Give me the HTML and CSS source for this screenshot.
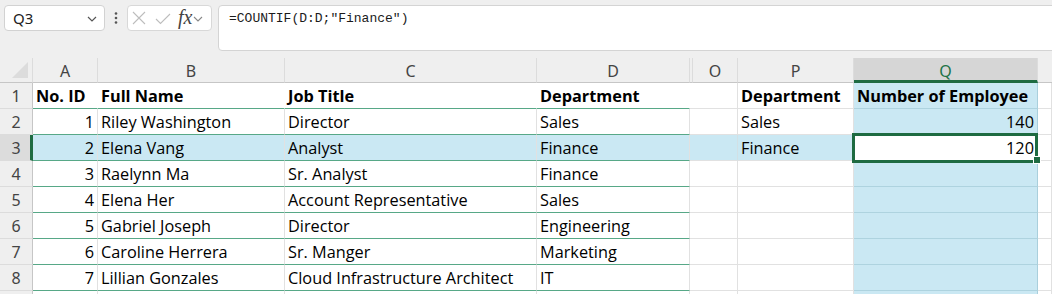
FILE: index.html
```html
<!DOCTYPE html>
<html>
<head>
<meta charset="utf-8">
<link rel="stylesheet" href="styles.css">
</head>
<body>
<div class="topbar">
  <div class="namebox">
    <span class="nb-text">Q3</span>
    <svg class="nb-chev" width="10" height="6" viewBox="0 0 10 6"><path d="M1 1 L5 5 L9 1" fill="none" stroke="#555" stroke-width="1.2"/></svg>
  </div>
  <div class="dots">
    <svg width="4" height="12" viewBox="0 0 4 12"><circle cx="2" cy="1.5" r="1.3" fill="#555"/><circle cx="2" cy="6" r="1.3" fill="#555"/><circle cx="2" cy="10.5" r="1.3" fill="#555"/></svg>
  </div>
  <div class="fxbox">
    <svg class="ic-x" width="14" height="14" viewBox="0 0 14 14"><path d="M1 1 L13 13 M13 1 L1 13" stroke="#bdbdbd" stroke-width="1.1" fill="none"/></svg>
    <svg class="ic-check" width="16" height="12" viewBox="0 0 16 12"><path d="M1 6 L5.5 10.5 L15 1" stroke="#bdbdbd" stroke-width="1.1" fill="none"/></svg>
    <span class="fx">fx</span>
    <svg class="fx-chev" width="10" height="6" viewBox="0 0 10 6"><path d="M1 1 L5 5 L9 1" fill="none" stroke="#888" stroke-width="1.1"/></svg>
  </div>
  <div class="formula">=COUNTIF(D:D;"Finance")</div>
</div>

<div class="sheet">
  <!-- header row -->
  <div class="h corner"><svg width="18" height="18" viewBox="0 0 18 18"><path d="M17 1 L17 17 L1 17 Z" fill="#dcdcdc"/></svg></div>
  <div class="h">A</div>
  <div class="h">B</div>
  <div class="h">C</div>
  <div class="h">D</div>
  <div class="h gaph"></div>
  <div class="h">O</div>
  <div class="h">P</div>
  <div class="h hsel">Q</div>
  <div class="h hlast"></div>

  <!-- row 1 -->
  <div class="r">1</div>
  <div class="c t th">No. ID</div>
  <div class="c t th">Full Name</div>
  <div class="c t th">Job Title</div>
  <div class="c t th">Department</div>
  <div class="c gap"></div>
  <div class="c"></div>
  <div class="c b">Department</div>
  <div class="c q b">Number of Employee</div>
  <div class="c"></div>

  <!-- row 2 -->
  <div class="r">2</div>
  <div class="c t num">1</div>
  <div class="c t">Riley Washington</div>
  <div class="c t">Director</div>
  <div class="c t">Sales</div>
  <div class="c gap"></div>
  <div class="c"></div>
  <div class="c">Sales</div>
  <div class="c q num">140</div>
  <div class="c"></div>

  <!-- row 3 -->
  <div class="r rsel">3</div>
  <div class="c t num hl">2</div>
  <div class="c t hl">Elena Vang</div>
  <div class="c t hl">Analyst</div>
  <div class="c t hl">Finance</div>
  <div class="c gap hl"></div>
  <div class="c hl hlg"></div>
  <div class="c hl hlg">Finance</div>
  <div class="c num active">120<div class="sel"></div><div class="handle"></div></div>
  <div class="c"></div>

  <!-- row 4 -->
  <div class="r">4</div>
  <div class="c t num">3</div>
  <div class="c t">Raelynn Ma</div>
  <div class="c t">Sr. Analyst</div>
  <div class="c t">Finance</div>
  <div class="c gap"></div>
  <div class="c"></div>
  <div class="c"></div>
  <div class="c q"></div>
  <div class="c"></div>

  <!-- row 5 -->
  <div class="r">5</div>
  <div class="c t num">4</div>
  <div class="c t">Elena Her</div>
  <div class="c t">Account Representative</div>
  <div class="c t">Sales</div>
  <div class="c gap"></div>
  <div class="c"></div>
  <div class="c"></div>
  <div class="c q"></div>
  <div class="c"></div>

  <!-- row 6 -->
  <div class="r">6</div>
  <div class="c t num">5</div>
  <div class="c t">Gabriel Joseph</div>
  <div class="c t">Director</div>
  <div class="c t">Engineering</div>
  <div class="c gap"></div>
  <div class="c"></div>
  <div class="c"></div>
  <div class="c q"></div>
  <div class="c"></div>

  <!-- row 7 -->
  <div class="r">7</div>
  <div class="c t num">6</div>
  <div class="c t">Caroline Herrera</div>
  <div class="c t">Sr. Manger</div>
  <div class="c t">Marketing</div>
  <div class="c gap"></div>
  <div class="c"></div>
  <div class="c"></div>
  <div class="c q"></div>
  <div class="c"></div>

  <!-- row 8 -->
  <div class="r">8</div>
  <div class="c t num">7</div>
  <div class="c t">Lillian Gonzales</div>
  <div class="c t">Cloud Infrastructure Architect</div>
  <div class="c t">IT</div>
  <div class="c gap"></div>
  <div class="c"></div>
  <div class="c"></div>
  <div class="c q"></div>
  <div class="c"></div>

  <!-- row 9 -->
  <div class="r"></div>
  <div class="c"></div>
  <div class="c"></div>
  <div class="c"></div>
  <div class="c"></div>
  <div class="c gap"></div>
  <div class="c"></div>
  <div class="c"></div>
  <div class="c q"></div>
  <div class="c"></div>
</div>
</body>
</html>
```

FILE: styles.css
```css
html, body {
  margin: 0;
  padding: 0;
  background: #efefef;
  overflow: hidden;
}

.topbar {
  height: 58px;
  box-sizing: border-box;
  padding: 5px 0 0 4px;
  display: flex;
  align-items: flex-start;
}

.namebox {
  width: 101px;
  height: 26px;
  box-sizing: border-box;
  background: #fff;
  border: 1px solid #d2d2d2;
  border-radius: 4px;
  display: flex;
  align-items: center;
  justify-content: space-between;
  padding: 0 7px 0 8px;
  font-family: "Noto Sans", "Open Sans", sans-serif;
  font-size: 15px;
  color: #222;
}

.nb-chev { margin-top: 1px; }

.dots {
  width: 22px;
  height: 26px;
  display: flex;
  align-items: center;
  justify-content: center;
}

.fxbox {
  width: 85px;
  height: 26px;
  box-sizing: border-box;
  background: #fff;
  border: 1px solid #d8d8d8;
  border-radius: 4px;
  display: flex;
  align-items: center;
  padding-left: 4px;
}

.ic-x { margin-right: 9px; }
.ic-check { margin-right: 7px; margin-top: 1px; }

.fx {
  font-family: "Liberation Serif", serif;
  font-style: italic;
  font-size: 20px;
  color: #444;
  line-height: 1;
  margin-right: 1px;
  margin-top: -3px;
}

.fx-chev { margin-top: 1px; }

.formula {
  margin-left: 6px;
  flex: 1;
  margin-right: -20px;
  height: 46px;
  box-sizing: border-box;
  background: #fff;
  border: 1px solid #d4d4d4;
  border-radius: 4px;
  padding: 4px 0 0 10px;
  font-family: "Liberation Mono", "DejaVu Sans Mono", monospace;
  font-size: 13px;
  line-height: 18px;
  color: #1a1a1a;
}

.sheet {
  display: grid;
  grid-template-columns: 33px 65px 187px 252px 153px 3px 45px 116px 184px 1fr;
  grid-template-rows: 25px repeat(9, 26px);
  background: #fff;
}

.h {
  box-sizing: border-box;
  background: #efefef;
  border-right: 1px solid #dcdcdc;
  border-bottom: 1px solid #c6c6c6;
  display: flex;
  align-items: center;
  justify-content: center;
  font-family: "Noto Sans", "Open Sans", sans-serif;
  font-size: 16px;
  color: #444;
  padding-top: 1px;
}

.corner {
  justify-content: flex-start;
  align-items: flex-end;
  padding: 0 0 3px 11px;
  border-right: 1px solid #dcdcdc;
}

.gaph { border-left: 1px solid #dcdcdc; margin-left: -1px; }

.hsel {
  background: #d6d6d6;
  color: #217346;
  border-bottom: 3px solid #1e6b41;
  padding-top: 3px;
}

.hlast { border-right: none; }

.r {
  box-sizing: border-box;
  background: #efefef;
  border-right: 1px solid #c6c6c6;
  border-bottom: 1px solid #dcdcdc;
  display: flex;
  align-items: center;
  justify-content: center;
  font-family: "Noto Sans", "Open Sans", sans-serif;
  font-size: 16px;
  color: #444;
}

.rsel {
  background: #dcdcdc;
  border-right: 3px solid #1e6b41;
  padding-left: 2px;
}

.c {
  box-sizing: border-box;
  border-right: 1px solid #e1e1e1;
  border-bottom: 1px solid #e1e1e1;
  display: flex;
  align-items: center;
  padding: 0 3px 0 3px;
  font-family: "Open Sans", "Noto Sans", sans-serif;
  font-size: 16.3px;
  color: #000;
  white-space: nowrap;
  overflow: hidden;
}

.t { border-bottom: 1px solid #57a887; }
.th { border-right: 1px solid #fff; font-weight: bold; }
.b { font-weight: bold; }
.num { justify-content: flex-end; }

.gap { border-right: none; }

.q {
  background: #cae8f3;
  border-bottom-color: #aed3df;
  border-right-color: #a9cfdc;
}

.hl { background: #cae8f3; }
.hlg { border-right-color: #d2e0e5; }

.active {
  position: relative;
  overflow: visible;
  background: #fff;
  border-right-color: #a9cfdc;
  border-bottom-color: #aed3df;
}

.sel {
  position: absolute;
  left: -2px;
  top: -2px;
  width: 186px;
  height: 30px;
  box-sizing: border-box;
  border: 3px solid #1e6b41;
  pointer-events: none;
}

.handle {
  position: absolute;
  right: -3px;
  bottom: -3px;
  width: 6px;
  height: 6px;
  background: #1e6b41;
  box-shadow: 0 0 0 1px #fff;
}
```
